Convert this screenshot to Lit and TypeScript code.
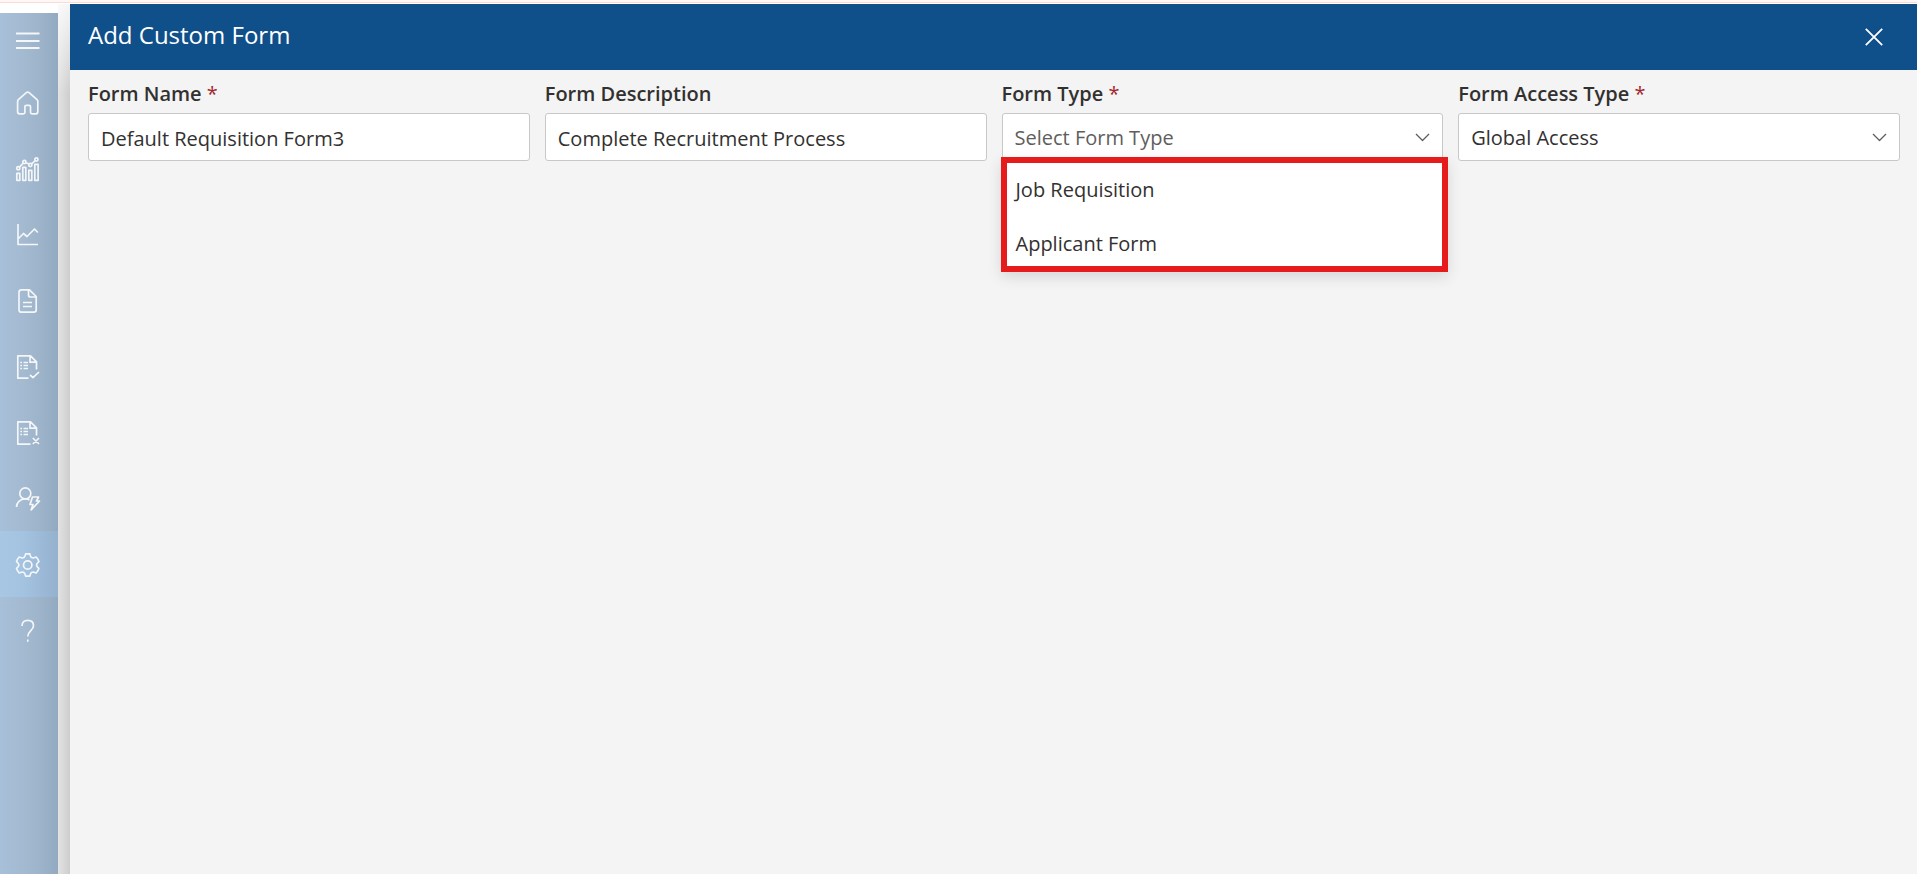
import { LitElement, html, css, svg } from "lit";
import { customElement, property, state } from "lit/decorators.js";

const icons: Record<string, unknown> = {
  menu: svg`<path d="M0 4.500H23.500M0 12H23.500M0 19H23.500" stroke-width="2"/>`,
  home: svg`<path d="M1.600 10.500Q1.600 9.400 2.400 8.700L10.300 1.700Q11.700 0.500 13.100 1.700L21 8.700Q21.800 9.400 21.800 10.500V20.800Q21.800 22.800 19.800 22.800H16Q14.500 22.800 14.500 21.300V15.500Q14.500 14.300 13.200 14.300H10.200Q8.900 14.300 8.900 15.500V21.300Q8.900 22.800 7.400 22.800H3.600Q1.600 22.800 1.600 20.800Z"/>`,
  bars: svg`<path d="M0.800 23.300V16.300H3.800V23.300ZM6.800 23.300V10.300H9.800V23.300ZM12.800 23.300V13.300H15.800V23.300ZM18.800 23.300V7.300H22.100V23.300ZM3.600 9.800L7 6.400M10.100 5.800L12.800 7M15.900 6.700L19.200 3.600"/><circle cx="2.300" cy="11.200" r="1.600"/><circle cx="8.400" cy="5" r="1.600"/><circle cx="14.300" cy="8" r="1.600"/><circle cx="20.400" cy="2.500" r="1.600"/>`,
  line: svg`<path d="M2 1V21.500H22M2.500 15.500L7.500 10.500L11 13.500L18.500 6L21.800 9.500"/>`,
  doc: svg`<path d="M5.500 0.800H13.500L20.200 7.500V20.800Q20.200 23.200 17.800 23.200H5.500Q3 23.200 3 20.800V3.200Q3 0.800 5.500 0.800ZM12.500 1V6Q12.500 8 14.500 8H20M7 13.500H16M7 17.500H16"/>`,
  approved: svg`<path d="M12.500 23.200H1.800V0.800H14.500L20.500 6.800V14.500M14 1V7.200H20.300M4.300 7.500H6M4.300 10.500H6M4.300 13.500H6M7.500 7.500H12M7.500 10.500H12M7.500 13.500H12M14 20L17 22.700L23 17"/>`,
  rejected: svg`<path d="M14.500 23.200H1.800V0.800H14.500L20.500 6.800V14.500M14 1V7.200H20.300M4.300 7.500H6M4.300 10.500H6M4.300 13.500H6M7.500 7.500H12M7.500 10.500H12M7.500 13.500H12M16.800 17L23 23M23 17L16.800 23"/>`,
  userflash: svg`<circle cx="9.300" cy="6.400" r="5.500"/><path d="M0.500 20C0.500 15.500 4 11.900 9.300 11.900Q11.800 11.900 13.500 13M16.500 10H22.600L20.500 14H23.500L15.200 22.800L17 17.500H14Z"/>`,
  gear: svg`<path d="M9.600 0.800H13.800Q14.300 3.500 15.100 4.200T17.300 5L20.200 4Q22.200 6 22.900 8.600Q20.500 10.500 20.500 12T22.900 15.400Q22.200 18 20.200 20L17.300 19Q15.900 19 15.100 19.800T13.800 23.200H9.600Q9.100 20.500 8.300 19.800T6.100 19L3.200 20Q1.200 18 0.500 15.400Q2.900 13.500 2.900 12T0.500 8.600Q1.200 6 3.200 4L6.100 5Q7.500 5 8.300 4.200T9.600 0.800Z"/><circle cx="11.700" cy="12" r="4.200"/>`,
  help: svg`<path d="M6 7C6 3 8.500 1.300 11.800 1.300C15.300 1.300 17.500 3.300 17.500 6.700C17.500 11.500 11.800 12 11.800 17.500M11.800 20.500V22.800"/>`,
};

const iconStyle = css`
  svg {
    display: block;
    fill: none;
    stroke: currentColor;
    stroke-width: 1.5;
    stroke-linejoin: round;
  }
`;

@customElement("side-nav")
class SideNav extends LitElement {
  static styles = [
    iconStyle,
    css`
      :host {
        display: block;
        background: linear-gradient(90deg, #a7bfd8 0, #a3bad1 40%, #9bb2c9 75%, #93a9bf 100%);
      }
      nav {
        display: flex;
        flex-direction: column;
      }
      a,
      button {
        display: flex;
        align-items: center;
        box-sizing: border-box;
        height: 66px;
        padding: 1px 16px 0;
        border: 0;
        background: none;
        color: #f4f6f8;
      }
      svg {
        stroke-width: 1.7;
        overflow: visible;
      }
      button {
        height: 56px;
        padding-top: 0;
      }
      .current {
        background: linear-gradient(90deg, #a8c7e5 0, #a4c3e0 40%, #9bb9d6 75%, #94b1cd 100%);
      }
    `,
  ];

  items = [
    ["home", "Home"],
    ["bars", "Dashboard"],
    ["line", "Reports"],
    ["doc", "Documents"],
    ["approved", "Approved requisitions"],
    ["rejected", "Rejected requisitions"],
    ["userflash", "Quick actions"],
    ["gear", "Settings"],
    ["help", "Help"],
  ];

  render() {
    return html`<nav aria-label="Main">
      <button type="button" aria-label="Menu"><svg width="24" height="24" viewBox="0 0 24 24">${icons.menu}</svg></button>
      ${this.items.map(
        ([icon, label]) => html`<a href="#${icon}" aria-label=${label} class=${icon === "gear" ? "current" : ""}
          ><svg width="24" height="24" viewBox="0 0 24 24">${icons[icon]}</svg></a
        >`
      )}
    </nav>`;
  }
}

@customElement("form-field")
class FormField extends LitElement {
  @property() label = "";
  @property() value = "";
  @property() placeholder = "";
  @property({ type: Boolean }) required = false;
  @property({ type: Boolean }) open = false;
  @property({ attribute: false }) options: string[] | null = null;

  static styles = [
    iconStyle,
    css`
      :host {
        display: block;
        min-width: 0;
        color: #323130;
        font: 20px/28px "Open Sans", sans-serif;
      }
      label {
        display: block;
        margin-bottom: 5px;
        font-size: 20px;
        font-weight: 600;
      }
      .star {
        color: #a4262c;
        font-weight: 400;
      }
      .control {
        position: relative;
      }
      input,
      select {
        display: block;
        box-sizing: border-box;
        width: 100%;
        height: 48px;
        margin: 0;
        padding: 2px 12px 0;
        border: 1px solid #c8c8c8;
        border-radius: 3px;
        outline: 0;
        background: #fff;
        color: inherit;
        font: inherit;
        font-size: 20px;
        appearance: none;
      }
      select {
        padding: 2px 40px 0 12px;
      }
      .empty {
        color: #605e5c;
      }
      .chevron {
        position: absolute;
        top: 20px;
        right: 13px;
        color: #605e5c;
        pointer-events: none;
      }
      .menu {
        position: absolute;
        z-index: 1;
        top: 44px;
        left: -1px;
        right: -5px;
        margin: 0;
        padding: 0 0 1px;
        border: 6px solid #e61b1b;
        background: #fff;
        box-shadow: 0 5px 14px rgba(0, 0, 0, 0.12);
        list-style: none;
      }
      .option {
        display: block;
        width: 100%;
        height: 54px;
        padding: 0 9px;
        border: 0;
        background: none;
        color: inherit;
        font: inherit;
        font-size: 20px;
        text-align: left;
      }
      li:last-child .option {
        height: 48px;
        padding-top: 6px;
      }
    `,
  ];

  private pick(option: string) {
    this.value = option;
    this.open = false;
  }

  render() {
    return html`
      <label for="control">${this.label}${this.required ? html` <span class="star">*</span>` : ""}</label>
      <div class="control">
        ${this.options
          ? html`<select
                id="control"
                class=${this.value ? "" : "empty"}
                @change=${(e: Event) => this.pick((e.target as HTMLSelectElement).value)}
              >
                ${this.placeholder ? html`<option value="" ?selected=${!this.value}>${this.placeholder}</option>` : ""}
                ${this.options.map((o) => html`<option ?selected=${o === this.value}>${o}</option>`)}
              </select>
              <svg class="chevron" width="15" height="9" viewBox="0 0 15 9"><path d="M1 1L7.500 7.500L14 1" stroke-width="1.300" /></svg>`
          : html`<input id="control" type="text" .value=${this.value} />`}
        ${this.open && this.options
          ? html`<ul class="menu">
              ${this.options.map(
                (o) => html`<li><button type="button" class="option" @click=${() => this.pick(o)}>${o}</button></li>`
              )}
            </ul>`
          : ""}
      </div>
    `;
  }
}

@customElement("app-root")
class AppRoot extends LitElement {
  @state() formTypes = ["Job Requisition", "Applicant Form"];

  static styles = [
    iconStyle,
    css`
      :host {
        display: flex;
        flex-direction: column;
        height: 100vh;
        overflow: hidden;
        background: #fff;
        font-family: "Open Sans", sans-serif;
      }
      .strip {
        flex: none;
        height: 2px;
        border-bottom: 1px solid #fbdcd5;
        margin-bottom: 1px;
        background: #fff7f5;
      }
      .page {
        display: flex;
        flex: 1;
        min-height: 0;
        gap: 12px;
      }
      side-nav {
        flex: none;
        width: 58px;
        margin-top: 9px;
      }
      .gutter {
        flex: none;
        width: 12px;
        margin: 0 -12px;
        background: linear-gradient(90deg, #e2e2e2, #cdcdcd);
        mask-image: linear-gradient(transparent -20px, #000 90px);
      }
      .panel {
        flex: 1;
        min-width: 0;
        background: #f4f4f4;
      }
      header {
        display: flex;
        align-items: center;
        justify-content: space-between;
        box-sizing: border-box;
        height: 66px;
        padding: 0 34px 4px 18px;
        background: #0f4f8a;
        color: #fff;
      }
      h1 {
        margin: 0;
        font-size: 24px;
        font-weight: 400;
        line-height: 32px;
      }
      .close {
        padding: 3px 0 0;
        border: 0;
        background: none;
        color: inherit;
      }
      form {
        display: grid;
        grid-template-columns: repeat(4, minmax(0, 1fr));
        gap: 15px;
        padding: 10px 17px 0 18px;
      }
    `,
  ];

  render() {
    return html`
      <div class="strip"></div>
      <div class="page">
        <side-nav></side-nav>
        <div class="gutter"></div>
        <main class="panel">
          <header>
            <h1>Add Custom Form</h1>
            <button class="close" type="button" aria-label="Close">
              <svg width="18" height="18" viewBox="0 0 18 18"><path d="M0.800 0.800L17.200 17.200M17.200 0.800L0.800 17.200" stroke-width="1.800" /></svg>
            </button>
          </header>
          <form>
            <form-field label="Form Name" required value="Default Requisition Form3"></form-field>
            <form-field label="Form Description" value="Complete Recruitment Process"></form-field>
            <form-field label="Form Type" required open placeholder="Select Form Type" .options=${this.formTypes}></form-field>
            <form-field label="Form Access Type" required value="Global Access" .options=${["Global Access"]}></form-field>
          </form>
        </main>
      </div>
    `;
  }
}
